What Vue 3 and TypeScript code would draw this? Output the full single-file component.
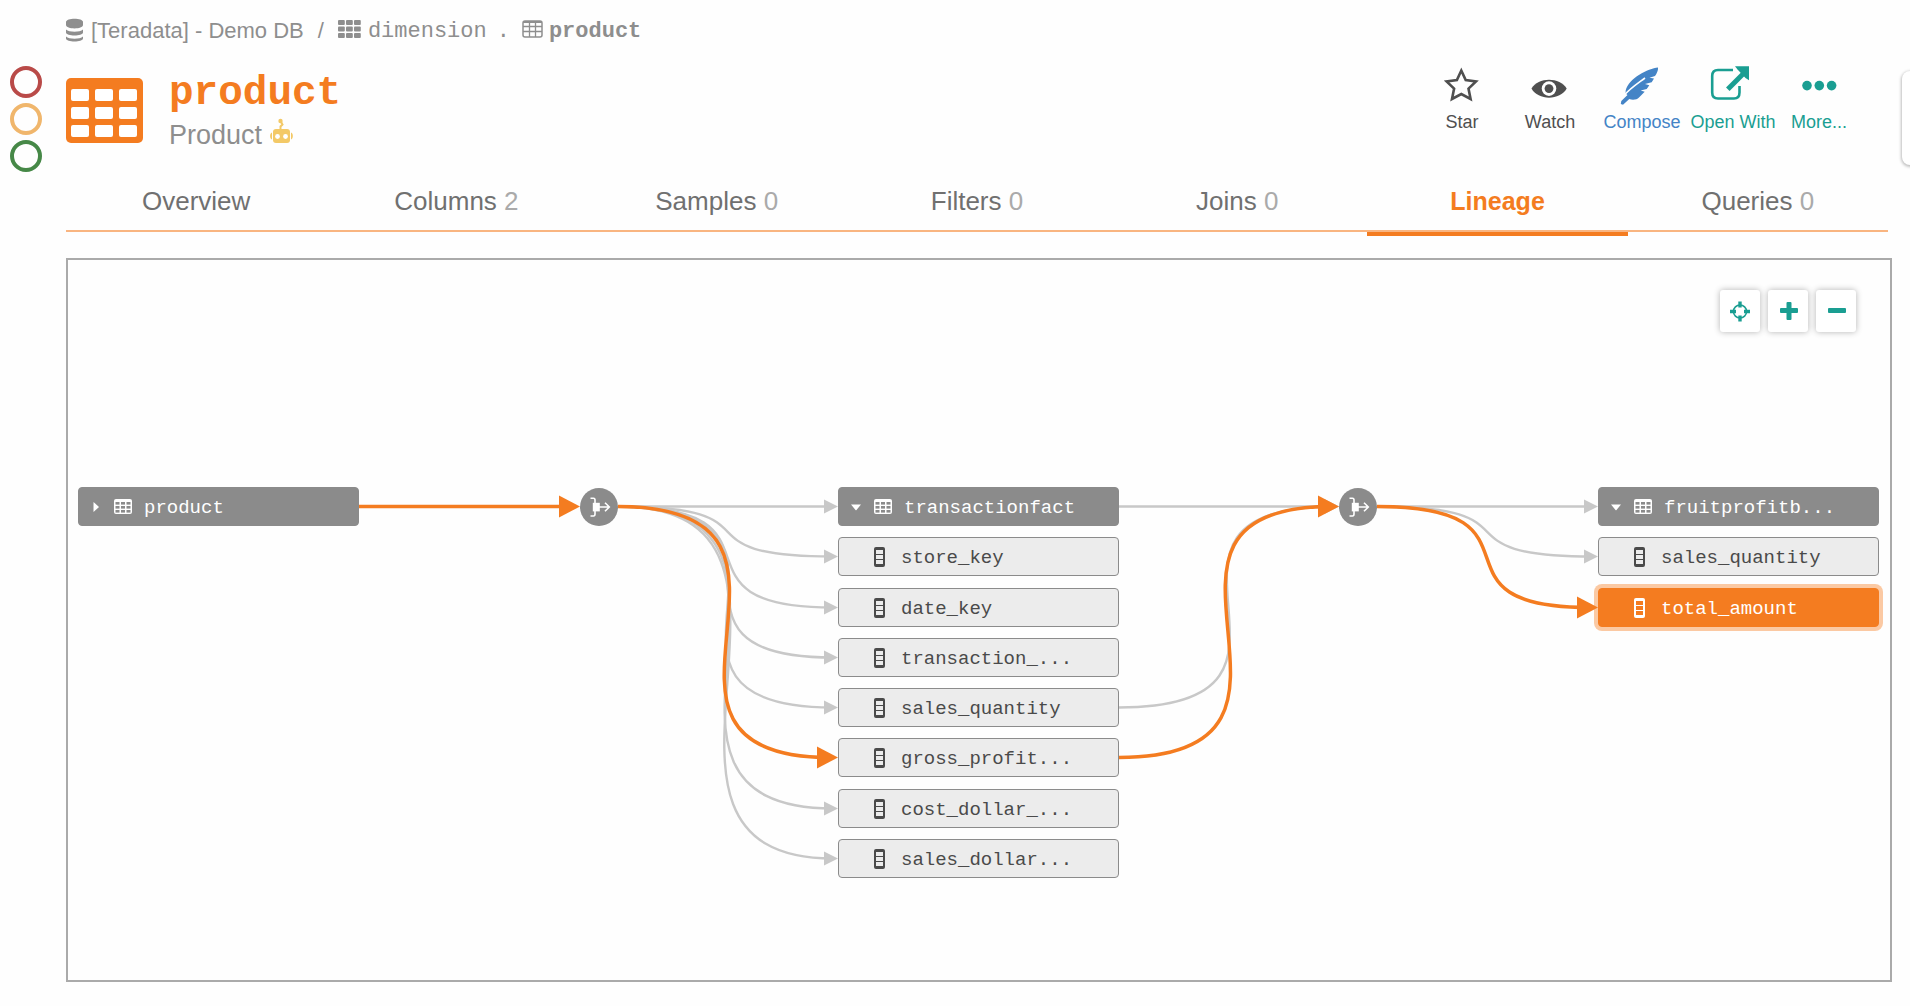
<script setup lang="ts">
import { computed } from 'vue'

interface Tab { label: string; count?: number; active?: boolean }
interface GraphNode { id: string; label: string; kind: 'table' | 'column'; x: number; y: number; open?: boolean; selected?: boolean }
interface Edge { x1: number; y1: number; x2: number; y2: number; bend?: number; hot?: boolean }

const tabs: Tab[] = [
  { label: 'Overview' },
  { label: 'Columns', count: 2 },
  { label: 'Samples', count: 0 },
  { label: 'Filters', count: 0 },
  { label: 'Joins', count: 0 },
  { label: 'Lineage', active: true },
  { label: 'Queries', count: 0 },
]

const NODE_W = 281
const NODE_H = 39
const JOIN_R = 19
const rows = [227, 277, 328, 378, 428, 478, 529, 579]
const cols = [10, 770, 1530]
const joins = [531, 1290]
const mid = (row: number) => rows[row] + NODE_H / 2
const midRow = mid(0)

const factColumns = ['store_key', 'date_key', 'transaction_...', 'sales_quantity', 'gross_profit...', 'cost_dollar_...', 'sales_dollar...']

const nodes: GraphNode[] = [
  { id: 'p', label: 'product', kind: 'table', x: cols[0], y: rows[0] },
  { id: 't', label: 'transactionfact', kind: 'table', x: cols[1], y: rows[0], open: true },
  ...factColumns.map((label, i): GraphNode => ({ id: 't' + i, label, kind: 'column', x: cols[1], y: rows[i + 1] })),
  { id: 'f', label: 'fruitprofitb...', kind: 'table', x: cols[2], y: rows[0], open: true },
  { id: 'f0', label: 'sales_quantity', kind: 'column', x: cols[2], y: rows[1] },
  { id: 'f1', label: 'total_amount', kind: 'column', x: cols[2], y: rows[2], selected: true },
]

// Horizontal reach of the control points, by number of rows an edge spans
const bends = [0, 168, 182, 210, 234, 240, 242, 244]

const out = (join: number, col: number, row: number, hot = false): Edge =>
  ({ x1: joins[join] + JOIN_R, y1: midRow, x2: cols[col], y2: mid(row), bend: bends[row], hot })
const into = (join: number, col: number, row: number, hot = false): Edge =>
  ({ x1: cols[col] + NODE_W, y1: mid(row), x2: joins[join] - JOIN_R, y2: midRow, bend: bends[row], hot })

const edges: Edge[] = [
  ...[0, 1, 2, 3, 4, 6, 7].map((r) => out(0, 1, r)),
  into(1, 1, 0),
  into(1, 1, 4),
  out(1, 2, 0),
  out(1, 2, 1),
  into(0, 0, 0, true),
  out(0, 1, 5, true),
  into(1, 1, 5, true),
  out(1, 2, 2, true),
]

const drawn = computed(() => edges.map((e) => {
  const bend = e.bend ?? 0
  const len = e.hot ? 21 : 14
  const half = e.hot ? 11 : 7
  const stop = e.x2 - (e.hot ? 8 : 5)
  return {
    hot: e.hot,
    width: e.hot ? 3.5 : 2.4,
    line: `M${e.x1} ${e.y1}C${e.x1 + bend} ${e.y1} ${e.x2 - bend} ${e.y2} ${stop} ${e.y2}`,
    head: `M${e.x2 - len} ${e.y2 - half}L${e.x2} ${e.y2}L${e.x2 - len} ${e.y2 + half}Z`,
  }
}))
</script>

<template>
  <div class="page">
    <aside class="rail" aria-label="Trust flags">
      <span class="flag red"></span>
      <span class="flag amber"></span>
      <span class="flag green"></span>
    </aside>

    <main class="main">
      <nav class="crumbs" aria-label="Breadcrumb">
        <svg class="db-icon" width="17" height="24" viewBox="0 0 17 24" fill="#8e8e8e">
          <path d="M0 4C0-.5 17-.5 17 4V7C17 11.500 0 11.500 0 7Z" />
          <path d="M0 11.500C3 14.500 14 14.500 17 11.500V14.500C17 18.500 0 18.500 0 14.500Z" />
          <path d="M0 18.500C3 21.500 14 21.500 17 18.500V20.500C17 24.500 0 24.500 0 20.500Z" />
        </svg>
        <a href="#" class="db">[Teradata] - Demo DB</a>
        <span class="slash">/</span>
        <svg class="grid-icon" width="23" height="18" viewBox="0 0 23 18" fill="#8e8e8e">
          <template v-for="r in 3" :key="r">
            <rect v-for="c in 3" :key="c" :x="(c - 1) * 8" :y="(r - 1) * 6.500" width="6.800" height="5" rx="1" />
          </template>
        </svg>
        <a href="#" class="mono schema">dimension</a>
        <span class="mono dot">.</span>
        <svg class="grid-icon" width="21" height="18" viewBox="0 0 21 18" fill="none" stroke="#8e8e8e">
          <rect x="1" y="1" width="19" height="16" rx="2" stroke-width="1.500" />
          <path d="M1 2H20" stroke-width="2" />
          <path d="M1 6.500H20M1 11.500H20M7.500 2V17M13.500 2V17" stroke-width="1.300" />
        </svg>
        <a href="#" class="mono current">product</a>
      </nav>

      <header class="header">
        <svg class="table-icon" width="77" height="65" viewBox="0 0 77 65">
          <rect width="77" height="65" rx="5" fill="#f47c20" />
          <g fill="#fff">
            <template v-for="y in [11, 29, 47]" :key="y">
              <rect v-for="x in [5, 29, 53]" :key="x" :x="x" :y="y" width="18" height="12" rx="2" />
            </template>
          </g>
        </svg>
        <div class="titles">
          <h1 class="mono">product</h1>
          <p>Product
            <svg width="24" height="26" viewBox="0 0 24 26" fill="#f3c967">
              <circle cx="10.500" cy="3" r="2.200" />
              <path d="M10.500 3L12.500 6.500L10.500 8.500V12" fill="none" stroke="#f3c967" stroke-width="2" />
              <rect x="3" y="11" width="17" height="14" rx="3" />
              <path d="M2 14.500V21.500C-.5 21-.5 15 2 14.500ZM21 14.500V21.500C23.500 21 23.500 15 21 14.500Z" />
              <circle cx="7.500" cy="18.500" r="2.400" fill="#fff" />
              <circle cx="15.500" cy="18.500" r="2.400" fill="#fff" />
            </svg>
          </p>
        </div>
        <div class="actions">
          <button type="button">
            <svg width="44" height="40" viewBox="0 0 44 40" fill="none" stroke="#4f4f4f" stroke-width="2.600">
              <path d="M21.300 6.500L25.700 16L36 17.400L28.500 24.600L30.600 35L21.300 30L12 35L14.100 24.600L6.600 17.400L16.900 16Z" />
            </svg>
            <span>Star</span>
          </button>
          <button type="button">
            <svg width="44" height="40" viewBox="0 0 44 40">
              <path d="M3.500 24.600C10 12.700 32 12.700 38.700 24.600C32 36.700 10 36.700 3.500 24.600Z" fill="#4f4f4f" />
              <circle cx="21" cy="24.600" r="7.300" fill="#fff" />
              <circle cx="21" cy="24.600" r="4.400" fill="#4f4f4f" />
            </svg>
            <span>Watch</span>
          </button>
          <button type="button" class="blue">
            <svg width="44" height="40" viewBox="0 0 44 40">
              <path d="M38 3.500C28 4.500 9 14 5.700 26.500L5.500 29.500L7.500 31L1.300 37L.8 40L3 40.700L9.300 35C12 36.300 17 36 19 33.500L24.700 27.700L20.700 26.600L26.700 25L29.300 21.300L25 20L31.700 18.300L34 14.600L29.500 13.800L35 12Q38.500 7 38 3.500Z" fill="#4484c6" />
              <path d="M4.500 31C10 24.500 17 20 25 14" stroke="#fff" stroke-width="1.600" fill="none" />
            </svg>
            <span>Compose</span>
          </button>
          <button type="button" class="teal">
            <svg width="44" height="40" viewBox="0 0 44 40" fill="none" stroke="#1a9e92">
              <path d="M22 6H7Q1.200 6 1.200 12V28.500Q1.200 34.500 7 34.500H23Q28.500 34.500 28.500 28.500V22" stroke-width="2.600" />
              <path d="M16.800 25.200L32 10" stroke-width="5" />
              <path d="M24 2.300H38V16.300L34.500 14L26.500 5.500Z" fill="#1a9e92" stroke="none" />
            </svg>
            <span>Open With</span>
          </button>
          <button type="button" class="teal">
            <svg width="44" height="40" viewBox="0 0 44 40" fill="#1a9e92">
              <circle cx="10" cy="21.600" r="4.800" />
              <circle cx="22.300" cy="21.600" r="4.800" />
              <circle cx="34.600" cy="21.600" r="4.800" />
            </svg>
            <span>More...</span>
          </button>
        </div>
      </header>

      <nav class="tabs" aria-label="Sections">
        <a v-for="t in tabs" :key="t.label" href="#" class="tab" :class="{ active: t.active }">
          {{ t.label }}<span v-if="t.count !== undefined" class="count">&nbsp;{{ t.count }}</span>
        </a>
      </nav>

      <section class="canvas" aria-label="Lineage graph">
        <svg class="edges" width="100%" height="100%">
          <g v-for="(e, i) in drawn" :key="i" class="edge" :class="{ hot: e.hot }">
            <path class="line" :d="e.line" :stroke-width="e.width" />
          </g>
        </svg>

        <button
          v-for="n in nodes" :key="n.id" type="button" class="node mono"
          :class="[n.kind, { selected: n.selected }]" :style="{ left: n.x + 'px', top: n.y + 'px' }"
        >
          <span class="caret">
            <svg v-if="n.kind === 'table'" width="12" height="12" viewBox="0 0 12 12" fill="#fff">
              <path v-if="n.open" d="M1 3.500H11L6.500 9Q6 9.500 5.500 9Z" />
              <path v-else d="M3.500 1V11L8.500 6.500Q9 6 8.500 5.500Z" />
            </svg>
          </span>
          <span class="glyph">
            <svg v-if="n.kind === 'table'" width="18" height="15" viewBox="0 0 18 15">
              <rect width="18" height="15" rx="2" fill="#fff" />
              <g fill="#8b8b8b">
                <template v-for="y in [3, 7, 11]" :key="y">
                  <rect v-for="x in [1.500, 7, 12.500]" :key="x" :x="x" :y="y" width="4" height="2.600" />
                </template>
              </g>
            </svg>
            <svg v-else width="11" height="20" viewBox="0 0 11 20">
              <rect width="11" height="20" rx="2" fill="currentColor" />
              <rect v-for="y in [3, 8, 13]" :key="y" class="cell" x="2" :y="y" width="7" height="4" />
            </svg>
          </span>
          <span class="name">{{ n.label }}</span>
        </button>

        <svg
          v-for="x in joins" :key="x" class="join" width="38" height="38" viewBox="0 0 38 38"
          :style="{ left: x - JOIN_R + 'px' }"
        >
          <circle cx="19" cy="19" r="19" fill="#8b8b8b" />
          <path d="M10.500 10.200H13.500Q15 10.200 15 12V15M10.500 28H13.500Q15 28 15 26V23" fill="none" stroke="#fff" stroke-width="1.600" />
          <rect x="12.800" y="14.800" width="7" height="8.600" fill="#fff" />
          <path d="M19 19H29M25 14.700L29.300 19L25 23.300" fill="none" stroke="#fff" stroke-width="1.600" />
        </svg>

        <svg class="edges" width="100%" height="100%">
          <g v-for="(e, i) in drawn" :key="i" class="edge" :class="{ hot: e.hot }">
            <path class="head" :d="e.head" />
          </g>
        </svg>

        <div class="zoom">
          <button type="button" aria-label="Center">
            <svg width="20" height="20" viewBox="0 0 20 20" fill="none" stroke="#1a9e92">
              <circle cx="10" cy="10.500" r="6.500" stroke-width="1.600" />
              <path d="M10 .5V6.500M10 14.500V20.500M0 10.500H6M14 10.500H20" stroke-width="3.400" />
            </svg>
          </button>
          <button type="button" aria-label="Zoom in">
            <svg width="20" height="20" viewBox="0 0 20 20" fill="#1a9e92">
              <rect x="2" y="7" width="18" height="5" rx="1" />
              <rect x="8.500" y="1" width="5" height="18" rx="1" />
            </svg>
          </button>
          <button type="button" aria-label="Zoom out">
            <svg width="20" height="20" viewBox="0 0 20 20" fill="#1a9e92">
              <rect x="2" y="7" width="18" height="5" rx="1" />
            </svg>
          </button>
        </div>
      </section>
    </main>

    <div class="drawer" aria-hidden="true"></div>
  </div>
</template>

<style>
body {
  background: #fefefe;
}
</style>

<style scoped>
.page {
  position: relative;
  display: grid;
  grid-template-columns: 66px 1fr;
  min-height: 100vh;
  overflow: hidden;
  font-family: "Helvetica Neue", "Liberation Sans", Arial, sans-serif;
  color: #4f4f4f;
}
.mono {
  font-family: "Liberation Mono", "Courier New", monospace;
}
svg {
  display: block;
  flex: none;
  overflow: visible;
}
a {
  color: inherit;
  text-decoration: none;
}
button {
  padding: 0;
  border: 0;
  background: none;
  color: inherit;
  font-family: inherit;
  cursor: pointer;
}
.rail {
  display: flex;
  flex-direction: column;
  gap: 5px;
  padding: 66px 0 0 10px;
}
.flag {
  box-sizing: border-box;
  width: 32px;
  height: 32px;
  border: 4px solid;
  border-radius: 50%;
}
.red { color: #b94a48; }
.amber { color: #f0b66c; }
.green { color: #468847; }

.main {
  display: flex;
  flex-direction: column;
  min-width: 0;
  padding-right: 18px;
}
.crumbs {
  display: flex;
  align-items: center;
  height: 34px;
  padding-top: 14px;
  font-size: 22px;
  line-height: 32px;
  color: #8e8e8e;
  white-space: nowrap;
}
.crumbs .mono { padding-top: 2px; }
.db-icon { margin-bottom: 2px; }
.grid-icon { margin-bottom: 4px; }
.db { margin-left: 8px; }
.slash { margin: 0 14px; }
.schema { margin-left: 7px; }
.dot { margin: 0 12px 0 10px; }
.current {
  margin-left: 6px;
  font-weight: 700;
}
.header {
  display: flex;
  align-items: flex-start;
  height: 124px;
}
.table-icon {
  margin-top: 30px;
}
.titles {
  margin: 19px auto 0 26px;
}
h1 {
  margin: 0;
  padding-top: 4px;
  font-size: 41px;
  line-height: 44px;
  font-weight: 700;
  color: #f47c20;
}
.titles p {
  display: flex;
  gap: 8px;
  margin: 0;
  font-size: 27px;
  line-height: 40px;
  color: #8e8e8e;
}
.titles p svg {
  margin-top: 3px;
}
.actions {
  display: grid;
  grid-template-columns: 86px 90px 94px 88px 84px;
  margin: 16px 31px 0 0;
}
.actions button {
  display: flex;
  flex-direction: column;
  align-items: center;
  gap: 6px;
  font-size: 18px;
  line-height: 24px;
  white-space: nowrap;
}
.actions .blue { color: #4484c6; }
.actions .teal { color: #1a9e92; }

.tabs {
  display: grid;
  grid-template-columns: repeat(7, 1fr);
  height: 58px;
  margin-right: 4px;
  border-bottom: 2px solid #f9b581;
}
.tab {
  height: 60px;
  font-size: 26px;
  line-height: 58px;
  text-align: center;
  color: #707070;
}
.count { color: #aaa; }
.tab.active {
  border-bottom: 4px solid #f47c20;
  font-size: 25px;
  font-weight: 700;
  color: #f47c20;
}
.canvas {
  position: relative;
  flex: 1;
  min-height: 640px;
  margin: 26px 0 24px;
  border: 2px solid #aaa;
  overflow: hidden;
}
.edges {
  position: absolute;
  inset: 0;
  pointer-events: none;
}
.line {
  fill: none;
  stroke: #c8c8c8;
}
.head { fill: #c8c8c8; }
.hot .line { stroke: #f47c20; }
.hot .head { fill: #f47c20; }
.node {
  position: absolute;
  box-sizing: border-box;
  display: flex;
  align-items: center;
  width: 281px;
  height: 39px;
  padding-left: 11px;
  border: 1px solid #8b8b8b;
  border-radius: 4px;
  font-size: 19px;
  line-height: 24px;
  text-align: left;
  white-space: nowrap;
}
.caret { width: 24px; }
.glyph { width: 27px; }
.table .glyph { width: 30px; }
.name { padding-top: 3px; }
.table {
  background: #8b8b8b;
  color: #fff;
}
.column {
  background: #ececec;
  color: #4a4a4a;
}
.cell { fill: #ececec; }
.node.selected {
  background: #f47c20;
  border-color: #f47c20;
  box-shadow: 0 0 0 4px #fbc9a3;
  color: #fff;
}
.selected .cell { fill: #f47c20; }
.join {
  position: absolute;
  top: 228px;
}
.zoom {
  position: absolute;
  top: 30px;
  right: 34px;
  display: flex;
  gap: 8px;
}
.zoom button {
  display: grid;
  place-items: center;
  width: 40px;
  height: 42px;
  border-radius: 3px;
  background: #fff;
  box-shadow: 0 0 6px rgba(0, 0, 0, 0.3);
}
.drawer {
  position: absolute;
  top: 71px;
  right: -12px;
  width: 20px;
  height: 94px;
  border-radius: 8px;
  background: #fff;
  box-shadow: 0 1px 3px 1px rgba(0, 0, 0, 0.25);
}
</style>
